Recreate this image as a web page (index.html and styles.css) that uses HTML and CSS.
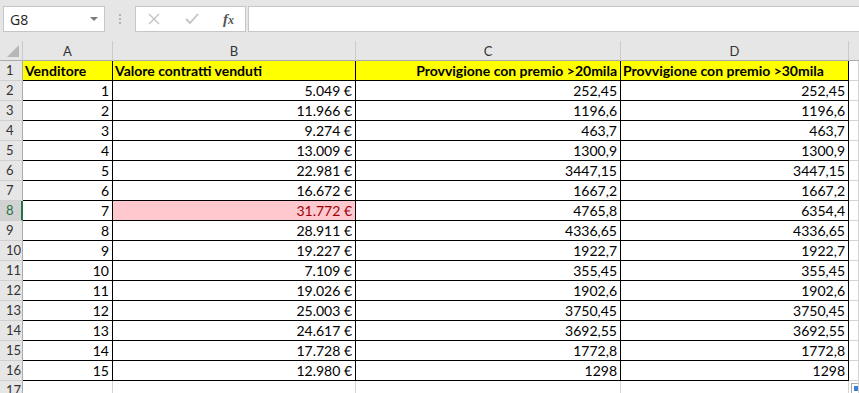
FILE: index.html
```html
<!DOCTYPE html>
<html lang="it">
<head>
<meta charset="utf-8">
<title>Foglio</title>
<link rel="stylesheet" href="styles.css">
</head>
<body>
<div class="app">
  <div class="toolbar">
    <div class="namebox"><span class="nb-text">G8</span><span class="nb-arrow"></span></div>
    <div class="grip"><span></span><span></span><span></span></div>
    <div class="fxbox">
      <svg class="ico" width="14" height="14" viewBox="0 0 14 14"><path d="M2 2 L12 12 M12 2 L2 12" stroke="#c2c2c2" stroke-width="1.4" fill="none"/></svg>
      <svg class="ico" width="16" height="14" viewBox="0 0 16 14"><path d="M2 7 L6 11 L14 2" stroke="#c2c2c2" stroke-width="1.8" fill="none"/></svg>
      <span class="fx">f<span class="fxx">x</span></span>
    </div>
    <div class="formula"></div>
  </div>
  <div class="sheet">
    <div class="corner"><span class="tri"></span></div>
    <div class="ch">A</div><div class="ch">B</div><div class="ch">C</div><div class="ch">D</div><div class="ch last"></div>

    <div class="rh">1</div>
    <div class="c b y bold">Venditore</div>
    <div class="c b y bold">Valore contratti venduti</div>
    <div class="c b y bold r">Provvigione con premio &gt;20mila</div>
    <div class="c b y bold">Provvigione con premio &gt;30mila</div>
    <div class="c"></div>

    <div class="rh">2</div><div class="c b r">1</div><div class="c b r">5.049 €</div><div class="c b r">252,45</div><div class="c b r">252,45</div><div class="c"></div>
    <div class="rh">3</div><div class="c b r">2</div><div class="c b r">11.966 €</div><div class="c b r">1196,6</div><div class="c b r">1196,6</div><div class="c"></div>
    <div class="rh">4</div><div class="c b r">3</div><div class="c b r">9.274 €</div><div class="c b r">463,7</div><div class="c b r">463,7</div><div class="c"></div>
    <div class="rh">5</div><div class="c b r">4</div><div class="c b r">13.009 €</div><div class="c b r">1300,9</div><div class="c b r">1300,9</div><div class="c"></div>
    <div class="rh">6</div><div class="c b r">5</div><div class="c b r">22.981 €</div><div class="c b r">3447,15</div><div class="c b r">3447,15</div><div class="c"></div>
    <div class="rh">7</div><div class="c b r">6</div><div class="c b r">16.672 €</div><div class="c b r">1667,2</div><div class="c b r">1667,2</div><div class="c"></div>
    <div class="rh sel">8</div><div class="c b r">7</div><div class="c b r bad">31.772 €</div><div class="c b r">4765,8</div><div class="c b r">6354,4</div><div class="c"></div>
    <div class="rh">9</div><div class="c b r">8</div><div class="c b r">28.911 €</div><div class="c b r">4336,65</div><div class="c b r">4336,65</div><div class="c"></div>
    <div class="rh">10</div><div class="c b r">9</div><div class="c b r">19.227 €</div><div class="c b r">1922,7</div><div class="c b r">1922,7</div><div class="c"></div>
    <div class="rh">11</div><div class="c b r">10</div><div class="c b r">7.109 €</div><div class="c b r">355,45</div><div class="c b r">355,45</div><div class="c"></div>
    <div class="rh">12</div><div class="c b r">11</div><div class="c b r">19.026 €</div><div class="c b r">1902,6</div><div class="c b r">1902,6</div><div class="c"></div>
    <div class="rh">13</div><div class="c b r">12</div><div class="c b r">25.003 €</div><div class="c b r">3750,45</div><div class="c b r">3750,45</div><div class="c"></div>
    <div class="rh">14</div><div class="c b r">13</div><div class="c b r">24.617 €</div><div class="c b r">3692,55</div><div class="c b r">3692,55</div><div class="c"></div>
    <div class="rh">15</div><div class="c b r">14</div><div class="c b r">17.728 €</div><div class="c b r">1772,8</div><div class="c b r">1772,8</div><div class="c"></div>
    <div class="rh">16</div><div class="c b r">15</div><div class="c b r">12.980 €</div><div class="c b r">1298</div><div class="c b r">1298</div><div class="c"></div>
    <div class="rh">17</div><div class="c"></div><div class="c"></div><div class="c"></div><div class="c"></div><div class="c"><span class="qa"></span></div>
  </div>
</div>
</body>
</html>
```
FILE: styles.css
```css
* { box-sizing: border-box; }
html, body { margin: 0; padding: 0; background: #ffffff; overflow: hidden; }
body { width: 859px; height: 393px; font-family: Lato, "Liberation Sans", sans-serif; }
.app { width: 859px; height: 393px; overflow: hidden; }

.toolbar {
  height: 41px;
  background: #e6e6e6;
  display: flex;
  align-items: flex-start;
  padding-top: 6px;
  padding-left: 3px;
}
.namebox {
  width: 102px; height: 26px;
  background: #fff;
  border: 1px solid #c6c6c6;
  display: flex; align-items: center; justify-content: space-between;
  padding: 0 6px 0 6px;
}
.nb-text { font-family: "Open Sans", sans-serif; font-size: 14px; color: #222; }
.nb-arrow { width: 0; height: 0; border-left: 4px solid transparent; border-right: 4px solid transparent; border-top: 4px solid #7a7a7a; }
.grip { width: 30px; height: 26px; display: flex; flex-direction: column; align-items: center; justify-content: center; gap: 2px; }
.grip span { width: 2px; height: 2px; background: #b3b3b3; }
.fxbox {
  width: 111px; height: 26px;
  background: #fff;
  border: 1px solid #c6c6c6;
  display: flex; align-items: center;
  padding-left: 11px; gap: 23px;
}
.ico { display: block; }
.fx { font-family: "Liberation Serif", serif; font-style: italic; font-size: 15px; color: #555; font-weight: bold; }
.fxx { font-size: 12px; }
.formula {
  margin-left: 2px;
  flex: 1; height: 26px;
  background: #fff;
  border: 1px solid #c6c6c6;
  border-right: none;
}

.sheet {
  display: grid;
  grid-template-columns: 23px 90px 243px 265px 228px 10px;
  grid-auto-rows: 20px;
  font-size: 14px;
}
.corner {
  background: #e6e6e6;
  border-right: 1px solid #c9c9c9;
  border-bottom: 1px solid #ababab;
  position: relative;
}
.tri {
  position: absolute; right: 3px; bottom: 3px;
  width: 0; height: 0;
  border-left: 12px solid transparent;
  border-bottom: 12px solid #b7b7b7;
}
.ch {
  background: #e6e6e6;
  border-right: 1px solid #cacaca;
  border-bottom: 1px solid #ababab;
  text-align: center;
  color: #333;
  font-size: 13px;
  line-height: 21px;
}
.ch.last { border-right: none; }
.rh {
  background: #e6e6e6;
  border-right: 1px solid #ababab;
  border-bottom: 1px solid #cfcfcf;
  color: #333;
  font-size: 13px;
  line-height: 19px;
  padding-left: 6px;
}
.rh.sel {
  background: #d2d2d2;
  color: #217346;
  border-right: 2px solid #217346;
}
.c {
  border-right: 1px solid #d4d4d4;
  border-bottom: 1px solid #d4d4d4;
  line-height: 20px;
  padding: 0 3px 0 2px;
  white-space: nowrap;
  overflow: hidden;
  color: #000;
  position: relative;
}
.c.b { border-right-color: #000; border-bottom-color: #000; }
.c.y { background: #ffff00; }
.bold { font-weight: bold; }
.r { text-align: right; }
.bad { background: #ffc7ce; color: #9c0006; }
.qa {
  position: absolute; left: 2px; top: 2px;
  width: 10px; height: 12px;
  border: 1px solid #a9a9a9;
  background: #fff;
}
.qa::after { content: ""; position: absolute; left: 2px; top: 2px; width: 5px; height: 5px; background: #3c7fd1; }
```
